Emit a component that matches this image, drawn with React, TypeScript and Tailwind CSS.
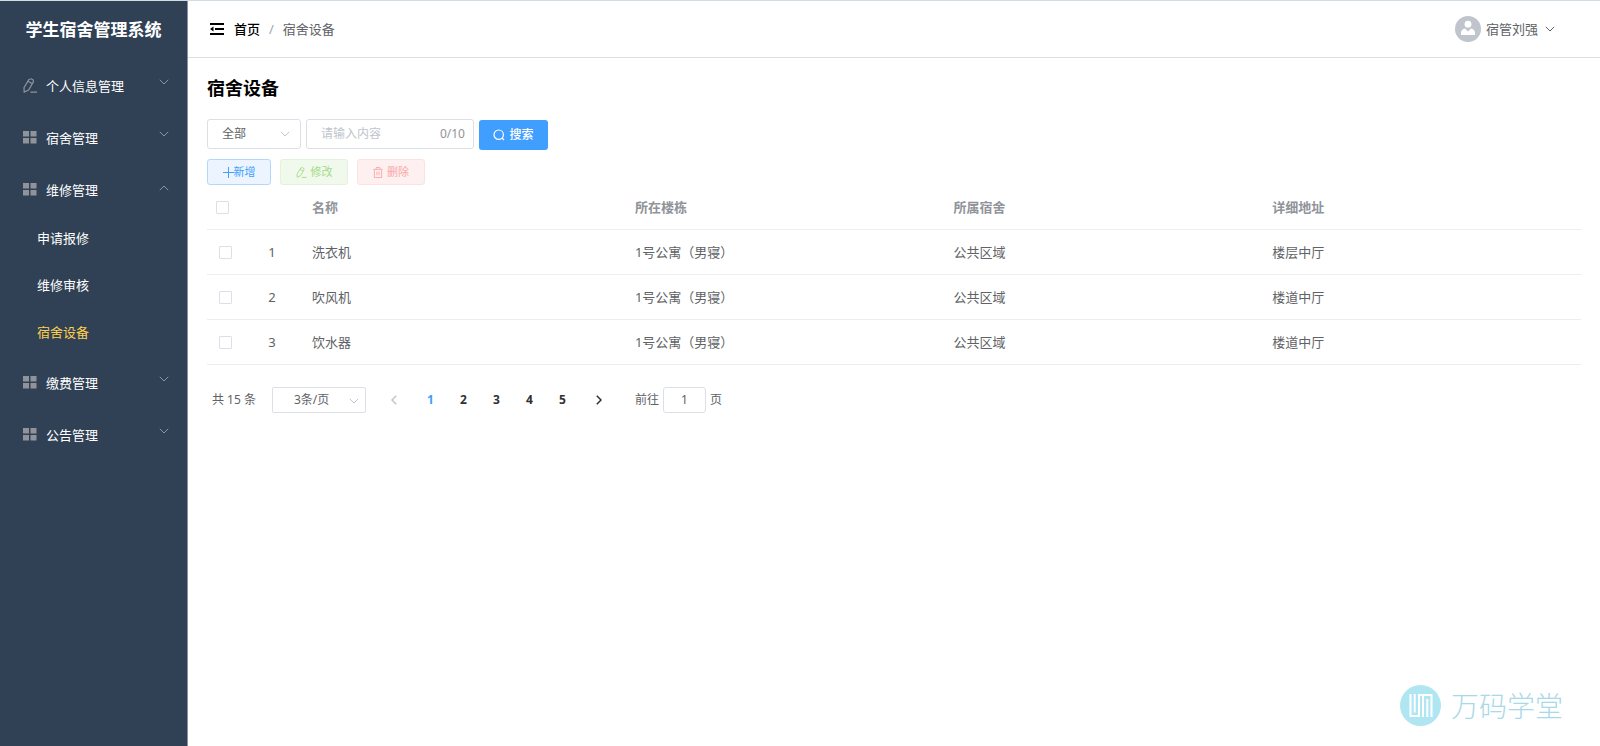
import { useState } from 'react';
import type { ReactNode } from 'react';

type IconProps = { className?: string };

function Chevron({ className = '' }: IconProps) {
  return (
    <svg viewBox="0 0 10 6" fill="none" stroke="currentColor" className={className} aria-hidden="true">
      <path d="M0.8 0.8 5 5 9.2 0.8" />
    </svg>
  );
}

function PenIcon({ className = '' }: IconProps) {
  return (
    <svg viewBox="0 0 14 15" fill="none" stroke="currentColor" strokeWidth="1.200" className={className} aria-hidden="true">
      <path d="M5.9 1.5 8.2.8 10.3 2 10.4 3.9 5.6 12 1.2 14 1 9.6ZM5 3.2l4.1 2.4M7.400 14.200H14" />
    </svg>
  );
}

function GridIcon({ className = '' }: IconProps) {
  return (
    <svg viewBox="0 0 14 14" fill="currentColor" className={className} aria-hidden="true">
      <path d="M0 0h6v5.500H0zM7.500 0h6v5.500h-6zM0 7h6v5.500H0zM7.500 7h6v5.500h-6z" />
    </svg>
  );
}

function FoldIcon({ className = '' }: IconProps) {
  return (
    <svg viewBox="0 0 14 12" fill="currentColor" className={className} aria-hidden="true">
      <path d="M0 0h14v2H0zM5 5h9v2H5zM0 10h14v2H0zM0 6l3.500-2.500v5z" />
    </svg>
  );
}

function SearchIcon({ className = '' }: IconProps) {
  return (
    <svg viewBox="0 0 12 12" fill="none" stroke="currentColor" strokeWidth="1.200" className={className} aria-hidden="true">
      <circle cx="5.700" cy="5.700" r="4.700" />
      <path d="m9 9 2 2" />
    </svg>
  );
}

function TrashIcon({ className = '' }: IconProps) {
  return (
    <svg viewBox="0 0 11 12" fill="none" stroke="currentColor" className={className} aria-hidden="true">
      <path d="M.5 2.500h10M3.500 2.500v-2h4v2M1.500 2.500v9h8v-9M4.300 5v4M6.700 5v4" />
    </svg>
  );
}

function PlusIcon({ className = '' }: IconProps) {
  return (
    <svg viewBox="0 0 11 11" fill="none" stroke="currentColor" className={className} aria-hidden="true">
      <path d="M0 5.500h11M5.500 0v11" />
    </svg>
  );
}

function Avatar() {
  return (
    <svg viewBox="0 0 26 26" className="size-[26px]" aria-hidden="true">
      <circle cx="13" cy="13" r="13" fill="#c0c4cc" />
      <circle cx="13" cy="8.200" r="3.400" fill="#fff" />
      <path d="M6 19v-2c0-2.500 1.600-3.800 4-4.400L13 15.500l3-2.900c2.400.6 4 1.900 4 4.400v2z" fill="#fff" />
    </svg>
  );
}

function BrandMark() {
  return (
    <svg viewBox="0 0 41 41" fill="none" className="size-[41px]" aria-hidden="true">
      <circle cx="20.500" cy="20.500" r="20.500" fill="#b0e6f2" />
      <g stroke="#fff" strokeWidth="2">
        <path d="M10.500 9v22h8.500V9M14.700 9v18.500" />
        <path d="M18 10h13.500v22M23 32V10M27.300 32V14" />
      </g>
    </svg>
  );
}

type MenuGroup = { label: string; icon: 'pen' | 'grid'; children?: string[] };

const menu: MenuGroup[] = [
  { label: '个人信息管理', icon: 'pen' },
  { label: '宿舍管理', icon: 'grid' },
  { label: '维修管理', icon: 'grid', children: ['申请报修', '维修审核', '宿舍设备'] },
  { label: '缴费管理', icon: 'grid' },
  { label: '公告管理', icon: 'grid' },
];

const devices = [
  { name: '洗衣机', building: '1号公寓（男寝）', room: '公共区域', address: '楼层中厅' },
  { name: '吹风机', building: '1号公寓（男寝）', room: '公共区域', address: '楼道中厅' },
  { name: '饮水器', building: '1号公寓（男寝）', room: '公共区域', address: '楼道中厅' },
];

function Sidebar() {
  return (
    <aside className="w-[188px] shrink-0 border-r border-[#8793a1] bg-[#304156] text-white">
      <h1 className="flex h-[59px] items-center justify-center pb-0.5 text-[17px] font-bold">学生宿舍管理系统</h1>
      <nav>
        <ul>
          {menu.map((group) => (
            <li key={group.label}>
              <button type="button" className="flex h-[52px] w-full items-center pr-[18px] pl-[23px]">
                {group.icon === 'pen' ? (
                  <PenIcon className="mb-0.5 h-[15px] w-[14px] text-[#909399]" />
                ) : (
                  <GridIcon className="size-[14px] text-[#909399]" />
                )}
                <span className="ml-[9px]">{group.label}</span>
                <Chevron
                  className={
                    group.children
                      ? 'mb-1 ml-auto h-[6px] w-[10px] rotate-180 text-[#909399]'
                      : 'mb-2 ml-auto h-[6px] w-[10px] text-[#909399]'
                  }
                />
              </button>
              {group.children && (
                <ul className="-mt-0.5 pb-0.5">
                  {group.children.map((child) => (
                    <li key={child}>
                      <a
                        href="#"
                        className={
                          child === '宿舍设备'
                            ? 'flex h-[47px] items-center pl-[37px] text-[#ffd04b]'
                            : 'flex h-[47px] items-center pl-[37px]'
                        }
                      >
                        {child}
                      </a>
                    </li>
                  ))}
                </ul>
              )}
            </li>
          ))}
        </ul>
      </nav>
    </aside>
  );
}

function Check({ label }: { label: string }) {
  return (
    <input
      type="checkbox"
      aria-label={label}
      className="mt-px block size-[13px] appearance-none rounded-[1px] border border-[#dcdfe6] bg-white checked:bg-[#409eff]"
    />
  );
}

function HeadCell({ children }: { children: ReactNode }) {
  return <th className="px-[10px] text-left font-bold text-[#909399]">{children}</th>;
}

function Toolbar() {
  const [query, setQuery] = useState('');
  return (
    <>
      <form className="mt-4 flex items-end gap-[5px] text-xs" onSubmit={(e) => e.preventDefault()}>
        <div className="relative mb-px w-[94px]">
          <select
            aria-label="筛选"
            className="block h-[30px] w-full appearance-none rounded-[3px] border border-[#dcdfe6] bg-white px-[14px] text-[#606266]"
          >
            <option>全部</option>
          </select>
          <Chevron className="pointer-events-none absolute top-3 right-[11px] h-[6px] w-[10px] text-[#c0c4cc]" />
        </div>
        <label className="mb-px flex h-[30px] w-[168px] items-center rounded-[3px] border border-[#dcdfe6] pr-2 pl-[14px]">
          <input
            aria-label="搜索内容"
            maxLength={10}
            value={query}
            onChange={(e) => setQuery(e.target.value)}
            placeholder="请输入内容"
            className="w-full min-w-0 text-[#606266] outline-none placeholder:text-[#c0c4cc]"
          />
          <span className="text-[#909399]">{query.length}/10</span>
        </label>
        <button
          type="submit"
          className="flex h-[30px] w-[69px] items-center justify-center gap-1 rounded-[3px] bg-[#409eff] font-medium text-white"
        >
          <SearchIcon className="size-3" />
          搜索
        </button>
      </form>
      <div className="mt-[9px] flex gap-[9px] text-[11px]">
        <button
          type="button"
          className="flex h-[26px] w-16 items-center justify-center rounded-[3px] border border-[#b3d8ff] bg-[#ecf5ff] text-[#409eff]"
        >
          <PlusIcon className="size-[11px]" />
          新增
        </button>
        <button
          type="button"
          disabled
          className="flex h-[26px] w-[68px] items-center justify-center gap-1 rounded-[3px] border border-[#e1f3d8] bg-[#f0f9eb] text-[#a4da89]"
        >
          <PenIcon className="h-[11px] w-[11px]" />
          修改
        </button>
        <button
          type="button"
          disabled
          className="flex h-[26px] w-[68px] items-center justify-center gap-1 rounded-[3px] border border-[#fde2e2] bg-[#fef0f0] text-[#f9a7a7]"
        >
          <TrashIcon className="h-[11px] w-[10px]" />
          删除
        </button>
      </div>
    </>
  );
}

function DeviceTable() {
  return (
    <table className="w-full table-fixed border-collapse text-[#606266]">
      <colgroup>
        <col className="w-[45px]" />
        <col className="w-[50px]" />
        <col className="w-[23.5%]" />
        <col />
        <col />
        <col />
      </colgroup>
      <thead>
        <tr className="h-[44px] border-b border-[#ebeef5]">
          <th className="pl-[9px]">
            <Check label="全选" />
          </th>
          <th aria-label="序号" />
          <HeadCell>名称</HeadCell>
          <HeadCell>所在楼栋</HeadCell>
          <HeadCell>所属宿舍</HeadCell>
          <HeadCell>详细地址</HeadCell>
        </tr>
      </thead>
      <tbody>
        {devices.map((device, i) => (
          <tr key={device.name} className="h-[45px] border-b border-[#ebeef5]">
            <td className="pl-3">
              <Check label={`选择${device.name}`} />
            </td>
            <td className="pr-[10px] text-center">{i + 1}</td>
            <td className="px-[10px]">{device.name}</td>
            <td className="px-[10px]">{device.building}</td>
            <td className="px-[10px]">{device.room}</td>
            <td className="px-[10px]">{device.address}</td>
          </tr>
        ))}
      </tbody>
    </table>
  );
}

function Pagination() {
  const [page, setPage] = useState(1);
  return (
    <div className="mt-[22px] flex items-center pl-[5px] text-xs text-[#606266]">
      <span>共 15 条</span>
      <div className="relative ml-4 w-[94px]">
        <select
          aria-label="每页条数"
          className="block h-[26px] w-full appearance-none rounded-[2px] border border-[#dcdfe6] bg-white pl-[21px]"
        >
          <option>3条/页</option>
        </select>
        <Chevron className="pointer-events-none absolute top-[11px] right-[7px] h-[6px] w-[10px] text-[#c0c4cc]" />
      </div>
      <nav className="ml-[9px] flex items-center">
        <button type="button" aria-label="上一页" className="flex h-[26px] w-[39px] items-center justify-center text-[#c0c4cc]">
          <Chevron className="h-[6px] w-[10px] rotate-90 stroke-[1.5]" />
        </button>
        {[1, 2, 3, 4, 5].map((n) => (
          <button
            key={n}
            type="button"
            onClick={() => setPage(n)}
            className={
              n === page ? 'h-[26px] w-[33px] font-bold text-[#409eff]' : 'h-[26px] w-[33px] font-bold text-[#303133]'
            }
          >
            {n}
          </button>
        ))}
        <button type="button" aria-label="下一页" className="flex h-[26px] w-10 items-center justify-center text-[#303133]">
          <Chevron className="h-[6px] w-[10px] -rotate-90 stroke-[1.5]" />
        </button>
      </nav>
      <label className="ml-4 flex items-center gap-1">
        前往
        <input
          aria-label="页码"
          value={page}
          onChange={(e) => setPage(Number(e.target.value) || 1)}
          className="h-[26px] w-[43px] rounded-[3px] border border-[#dcdfe6] text-center"
        />
        页
      </label>
    </div>
  );
}

export default function App() {
  return (
    <div className="relative flex min-h-screen border-t border-[#d3dce2] bg-white font-['Noto_Sans','Noto_Sans_CJK_SC',sans-serif] text-[13px] leading-5 text-black">
      <Sidebar />
      <div className="min-w-0 flex-1">
        <header className="flex h-[57px] items-center border-b border-[#dcdfe6] pr-[45px] pl-[22px]">
          <button type="button" aria-label="收起菜单">
            <FoldIcon className="h-3 w-[14px]" />
          </button>
          <nav className="ml-[10px] flex items-center">
            <a href="#" className="font-medium">
              首页
            </a>
            <span className="mx-[9px] text-[#a0a5ad]">/</span>
            <span className="text-[#606266]">宿舍设备</span>
          </nav>
          <button type="button" className="ml-auto flex items-center text-[#606266]">
            <Avatar />
            <span className="ml-[5px]">宿管刘强</span>
            <Chevron className="ml-[7px] h-[6px] w-[10px]" />
          </button>
        </header>
        <main className="pt-4 pr-[19px] pl-[19px]">
          <h2 className="text-lg leading-7 font-bold">宿舍设备</h2>
          <div className="pt-px">
            <Toolbar />
          </div>
          <DeviceTable />
          <Pagination />
        </main>
      </div>
      <div className="pointer-events-none absolute right-[37px] bottom-5 flex items-center gap-[10px] text-[28px] font-light text-[#a9d9e8]">
        <BrandMark />
        <span>万码学堂</span>
      </div>
    </div>
  );
}
